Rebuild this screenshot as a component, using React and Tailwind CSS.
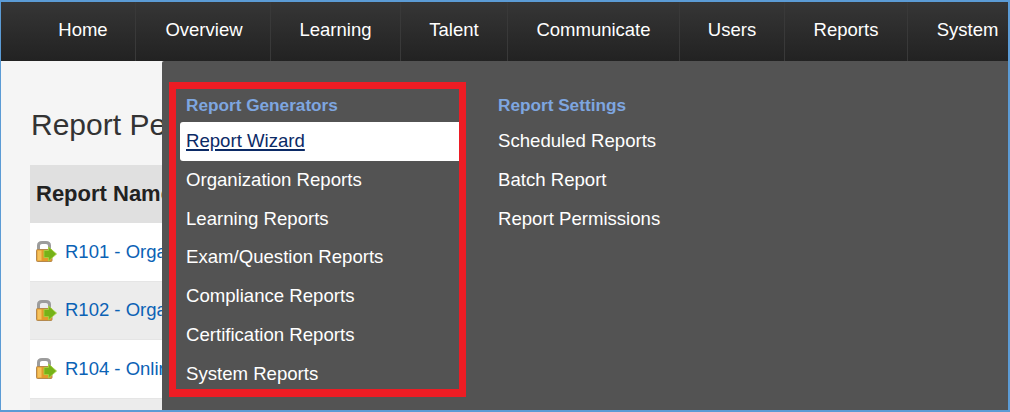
const font = { fontFamily: '"Liberation Sans", Arial, sans-serif' };

const nav = [
  ["Home", "w-[135px] pl-[30px]"],
  ["Overview", "w-[135px] pl-[2px]"],
  ["Learning", "w-[130px]"],
  ["Talent", "w-[107px]"],
  ["Communicate", "w-[172px]"],
  ["Users", "w-[105px]"],
  ["Reports", "w-[123px]"],
  ["System", "flex-1 pl-[19px]"],
];

function Lock() {
  return (
    <svg width="21" height="21" viewBox="0 0 21 21" className="shrink-0">
      <path d="M2.5 9V4.5C2.5 2 4 1.5 6 1.5h4c2 0 3.5.5 3.5 3V9" fill="none" stroke="#9c9c9c" strokeWidth="3" />
      <rect x="0.5" y="8.5" width="15.5" height="12" rx="1" fill="#e39a2c" stroke="#b4884e" strokeWidth="1" />
      <rect x="1.5" y="9.5" width="4" height="10" fill="#f5c25c" />
      <path d="M8 9.5h4.5V6l8 7-8 7v-3.5H8z" fill="#76b218" stroke="#a6d142" strokeWidth="0.9" />
    </svg>
  );
}

function Row({ text, shaded }) {
  return (
    <div className={`h-[58.5px] flex items-center pl-[6px] gap-[8px] border-b border-[#e5e5e5] ${shaded ? "bg-[#ececec]" : "bg-white"}`}>
      <Lock />
      <span className="text-[18.5px] text-[#0b62b5] whitespace-nowrap">{text}</span>
    </div>
  );
}

function MenuLink({ children, active }) {
  return (
    <div className={`h-[38.7px] flex items-center whitespace-nowrap text-[18.6px] ${active ? "bg-white rounded-l-[3px] text-[#0b2a66] underline decoration-2 underline-offset-2" : "text-white"}`}>
      {children}
    </div>
  );
}

export default function App() {
  const left = ["Organization Reports", "Learning Reports", "Exam/Question Reports", "Compliance Reports", "Certification Reports", "System Reports"];
  const right = ["Scheduled Reports", "Batch Report", "Report Permissions"];
  return (
    <div style={font} className="w-[1010px] h-[412px] overflow-hidden flex flex-col bg-[#f5f5f5] border-t-2 border-b-2 border-l border-r-2 border-[#5b9bd5]">
      <nav className="h-[59px] shrink-0 flex bg-gradient-to-b from-[#363636] to-[#222222]">
        {nav.map(([label, cls]) => (
          <div key={label} className={`${cls} h-full flex items-center justify-center pb-[3px] border-r border-[#393939] last:border-r-0 text-[18.5px] text-white whitespace-nowrap`}>
            {label}
          </div>
        ))}
      </nav>
      <main className="relative flex-1 pl-[29px] min-h-0 overflow-hidden">
        <h1 className="text-[30px] leading-[36px] mt-[46px] mb-[22px] pl-[1px] text-[#333] whitespace-nowrap">Report Permissions</h1>
        <div className="w-[400px]">
          <div className="h-[58px] flex items-center pl-[6px] pb-[1px] bg-[#e0e0e0] text-[22px] font-bold text-[#222]">Report Name</div>
          <Row text="R101 - Organization" />
          <Row text="R102 - Organization" shaded />
          <Row text="R104 - Online" />
          <div className="h-[20px] bg-[#ececec]" />
        </div>
        <div className="absolute left-[161px] right-0 top-0 bottom-0 bg-[#535353] flex pt-[21px] pl-[7px] rounded-tl-[2px]">
          <div className="w-[297px] h-[315px] border-[#ed1c24] border-t-[7px] border-x-[7px] border-b-[8px] pl-[4px] shrink-0">
            <div className="h-[33px] flex items-center pl-[6px] text-[17.2px] font-bold text-[#7ea6e0]">Report Generators</div>
            <div className="flex flex-col">
              <div className="pl-[6px] bg-white rounded-l-[3px]"><MenuLink active>Report Wizard</MenuLink></div>
              {left.map((t) => (
                <div key={t} className="pl-[6px]"><MenuLink>{t}</MenuLink></div>
              ))}
            </div>
          </div>
          <div className="ml-[32px] pt-[7px]">
            <div className="h-[33px] flex items-center text-[17.2px] font-bold text-[#7ea6e0]">Report Settings</div>
            {right.map((t) => (
              <MenuLink key={t}>{t}</MenuLink>
            ))}
          </div>
        </div>
      </main>
    </div>
  );
}
